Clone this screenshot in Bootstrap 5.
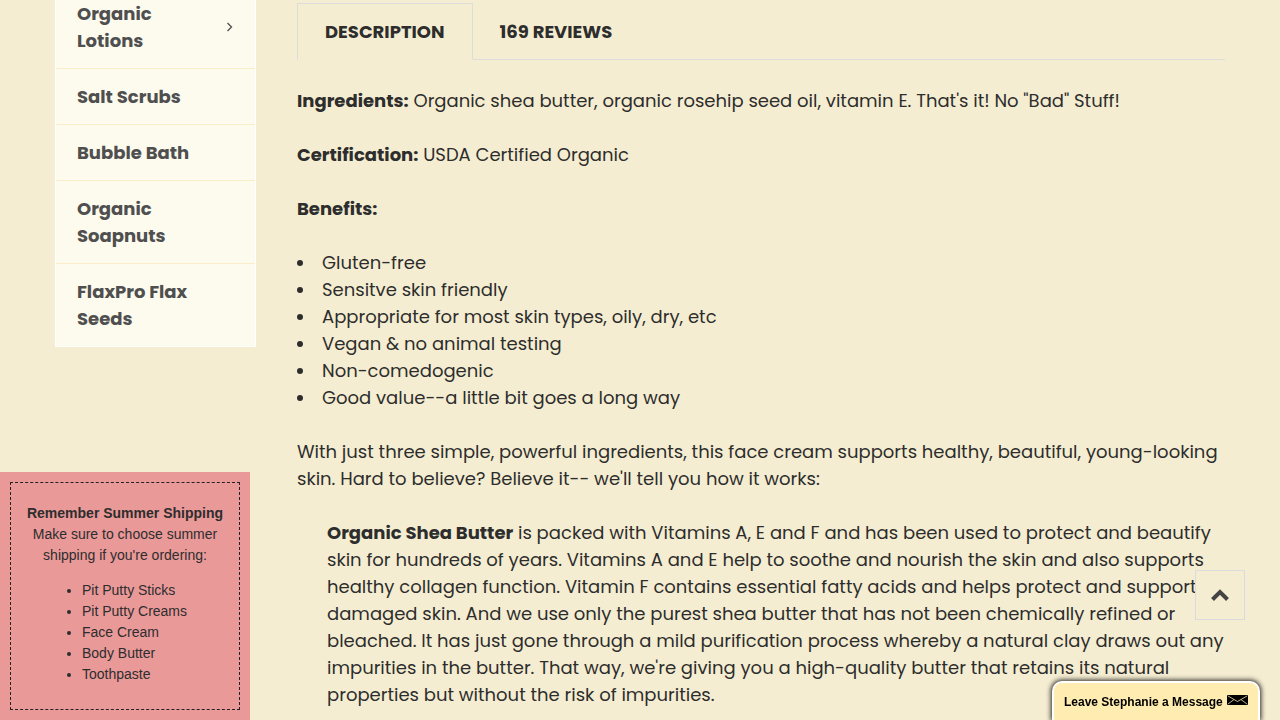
<!DOCTYPE html>
<html lang="en">
<head>
<meta charset="utf-8">
<meta name="viewport" content="width=device-width, initial-scale=1">
<title>Organic Face Cream</title>
<link href="https://cdn.jsdelivr.net/npm/bootstrap@5.3.0/dist/css/bootstrap.min.css" rel="stylesheet">
<style>
body{background:#f5edd1;color:#2d2d2d;font-family:Poppins,Inter,sans-serif;font-size:18px;line-height:27px;overflow-x:hidden}
.page{padding:0 55px;gap:41px;height:100vh;overflow:hidden}
.side{width:201px}
.side .list-group{--bs-list-group-bg:#fdfaee;border:1px solid #fff;border-top:0;--bs-list-group-border-radius:0}
.side .list-group-item{border:0;border-bottom:1px solid #faeec8;padding:14px 21px;color:#4f4f4f;font-weight:700;padding-right:54px}
.side .list-group-item:first-child{padding-top:0;padding-right:21px}
.side .list-group-item:last-child{border-bottom:0}
.copy{padding-top:3px}
.nav-tabs{--bs-nav-tabs-border-color:#dcdcdc;--bs-nav-tabs-border-radius:0;--bs-nav-tabs-link-active-color:#2d2d2d;--bs-nav-tabs-link-active-bg:#f5edd1;--bs-nav-tabs-link-active-border-color:#dcdcdc #dcdcdc #f5edd1;--bs-nav-link-padding-x:26px;--bs-nav-link-padding-y:14px;--bs-nav-link-color:#2d2d2d;--bs-nav-link-hover-color:#000}
.nav-tabs .nav-link{font-weight:700;text-transform:uppercase;line-height:27px}
.nav-tabs .nav-link.active{padding-left:27px;padding-right:27px}
.copy p,.copy ul{margin:0 0 27px}
.benefits{list-style:none;padding:0}
.benefits li{display:flex;align-items:center;gap:19px}
.benefits li::before{content:"";flex:none;width:6px;height:6px;border-radius:50%;background:#2d2d2d}
.copy .detail{margin-left:30px}
.notice{width:250px;padding:10px;background:#ea9999;font-family:Arial,"Liberation Sans",sans-serif;font-size:14px;line-height:21px}
.notice-box{border:1px dashed #222;padding:20px 12px 4px}
.notice ul{padding-left:59px;margin:14px 0 20px}
.to-top{right:35px;bottom:100px;width:50px;height:50px;background:#f5edd1;border:1px solid #d9dbdd;padding:0}
.chat{right:20px;bottom:0;width:208px;height:39px;background:#ffecb0;border:2px solid #fff;border-bottom:0;border-radius:10px 10px 0 0;box-shadow:0 0 5px 1px #222;color:#000;font:bold 12px/18px Arial,"Liberation Sans",sans-serif;padding:0 0 0 10px;gap:4px}
.chat svg{margin-bottom:4px}
</style>
</head>
<body>
<div class="page d-flex">
  <aside class="side flex-shrink-0">
    <nav class="list-group" aria-label="Categories">
      <a href="#" class="list-group-item d-flex align-items-center justify-content-between"><span>Organic<br>Lotions</span>
        <svg width="9" height="10" viewBox="0 0 9 10" fill="none" stroke="#4f4f4f" stroke-width="1.3" aria-hidden="true"><path d="M2.500 1 6.500 5 2.500 9"/></svg></a>
      <a href="#" class="list-group-item pe-0">Salt Scrubs</a>
      <a href="#" class="list-group-item pe-0">Bubble Bath</a>
      <a href="#" class="list-group-item">Organic Soapnuts</a>
      <a href="#" class="list-group-item">FlaxPro Flax Seeds</a>
    </nav>
  </aside>
  <main class="flex-grow-1 copy">
    <ul class="nav nav-tabs">
      <li class="nav-item"><a class="nav-link active" href="#description">Description</a></li>
      <li class="nav-item"><a class="nav-link" href="#reviews">169 Reviews</a></li>
    </ul>
    <p><strong>Ingredients:</strong> Organic shea butter, organic rosehip seed oil, vitamin E. That's it! No "Bad" Stuff!</p>
    <p><strong>Certification:</strong> USDA Certified Organic</p>
    <p><strong>Benefits:</strong></p>
    <ul class="benefits">
      <li>Gluten-free</li>
      <li>Sensitve skin friendly</li>
      <li>Appropriate for most skin types, oily, dry, etc</li>
      <li>Vegan &amp; no animal testing</li>
      <li>Non-comedogenic</li>
      <li>Good value--a little bit goes a long way</li>
    </ul>
    <p>With just three simple, powerful ingredients, this face cream supports healthy, beautiful, young-looking skin. Hard to believe? Believe it-- we'll tell you how it works:</p>
    <p class="detail"><strong>Organic Shea Butter</strong> is packed with Vitamins A, E and F and has been used to protect and beautify skin for hundreds of years. Vitamins A and E help to soothe and nourish the skin and also supports healthy collagen function. Vitamin F contains essential fatty acids and helps protect and support damaged skin. And we use only the purest shea butter that has not been chemically refined or bleached. It has just gone through a mild purification process whereby a natural clay draws out any impurities in the butter. That way, we're giving you a high-quality butter that retains its natural properties but without the risk of impurities.</p>
  </main>
</div>

<section class="notice position-fixed start-0 bottom-0">
  <div class="notice-box">
    <div class="text-center"><strong>Remember Summer Shipping</strong><br>Make sure to choose summer shipping if you're ordering:</div>
    <ul>
      <li>Pit Putty Sticks</li>
      <li>Pit Putty Creams</li>
      <li>Face Cream</li>
      <li>Body Butter</li>
      <li>Toothpaste</li>
    </ul>
  </div>
</section>

<button type="button" class="to-top position-fixed d-flex align-items-center justify-content-center" aria-label="Back to top">
  <svg width="20" height="14" viewBox="0 0 20 14" fill="none" stroke="#444" stroke-width="4" aria-hidden="true"><path d="M2.500 11.500 10 4 17.500 11.500"/></svg>
</button>

<button type="button" class="chat position-fixed d-flex align-items-center">
  <span>Leave Stephanie a Message</span>
  <svg width="21" height="10" viewBox="0 0 21 10" aria-hidden="true"><rect width="21" height="10" rx="1"/><path d="M1 1 10.500 6.500 20 1M1 9 7 4.500M20 9 14 4.500" fill="none" stroke="#d8c896" stroke-width=".9"/></svg>
</button>
<script src="https://cdn.jsdelivr.net/npm/bootstrap@5.3.0/dist/js/bootstrap.bundle.min.js"></script>
</body>
</html>
